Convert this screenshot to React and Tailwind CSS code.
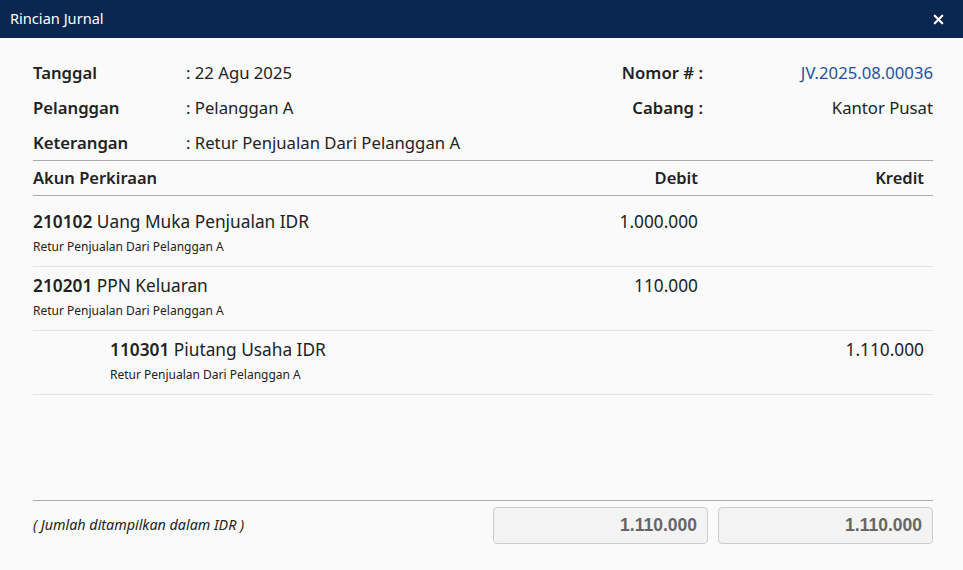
import { X } from "lucide-react";

const rows = [
  { code: "210102", name: "Uang Muka Penjualan IDR", note: "Retur Penjualan Dari Pelanggan A", debit: "1.000.000", kredit: "" },
  { code: "210201", name: "PPN Keluaran", note: "Retur Penjualan Dari Pelanggan A", debit: "110.000", kredit: "" },
  { code: "110301", name: "Piutang Usaha IDR", note: "Retur Penjualan Dari Pelanggan A", debit: "", kredit: "1.110.000", indent: true },
];

const InfoRow = ({ label, value }) => (
  <div className="flex h-[35px] items-center">
    <div className="w-[153px] font-semibold">{label}</div>
    <div>: {value}</div>
  </div>
);

export default function App() {
  return (
    <div
      className="flex h-[570px] w-[963px] flex-col bg-[#fafafa] text-[#222]"
      style={{ fontFamily: "'Noto Sans', 'Open Sans', sans-serif" }}
    >
      <div className="flex h-[38px] shrink-0 items-center justify-between bg-[#0a2751] pl-[10px] pr-[17px] text-white">
        <span className="text-[14.6px]">Rincian Jurnal</span>
        <X size={15} strokeWidth={3.5} />
      </div>

      <div className="flex flex-1 flex-col px-[30px] pt-[17px] text-[16.7px]">
        <div className="flex">
          <div className="flex-1 pl-[3px]">
            <InfoRow label="Tanggal" value="22 Agu 2025" />
            <InfoRow label="Pelanggan" value="Pelanggan A" />
            <InfoRow label="Keterangan" value="Retur Penjualan Dari Pelanggan A" />
          </div>
          <div className="w-[440px]">
            <div className="flex h-[35px] items-center">
              <div className="w-[210px] text-right font-semibold">Nomor # :</div>
              <div className="flex-1 text-right text-[#2451a0]">JV.2025.08.00036</div>
            </div>
            <div className="flex h-[35px] items-center">
              <div className="w-[210px] text-right font-semibold">Cabang :</div>
              <div className="flex-1 text-right">Kantor Pusat</div>
            </div>
          </div>
        </div>

        <div className="ml-[3px] flex h-[36px] items-center border-y border-[#aaa] text-[16.5px] font-semibold">
          <div className="flex-1">Akun Perkiraan</div>
          <div className="w-[215px] pr-[10px] text-right">Debit</div>
          <div className="w-[10px]" />
          <div className="w-[215px] pr-[9px] text-right">Kredit</div>
        </div>

        <div className="ml-[3px] pt-[7px] text-[17.3px]">
          {rows.map((r) => (
            <div key={r.code} className="flex h-[64px] border-b border-[#e4e4e4] pt-[8px]">
              <div className={r.indent ? "flex-1 pl-[77px]" : "flex-1"}>
                <div className="leading-[22px]">
                  <span className="font-semibold">{r.code}</span> {r.name}
                </div>
                <div className="mt-[5px] text-[12px] leading-[18px]">{r.note}</div>
              </div>
              <div className="w-[215px] pr-[10px] text-right leading-[22px]">{r.debit}</div>
              <div className="w-[10px]" />
              <div className="w-[215px] pr-[9px] text-right leading-[22px]">{r.kredit}</div>
            </div>
          ))}
        </div>

        <div className="mt-auto ml-[3px] flex border-t border-[#aaa] pb-[26px] pt-[6px]">
          <div className="flex-1 pt-[7px] text-[14.3px] italic">( Jumlah ditampilkan dalam IDR )</div>
          <div
            className="flex h-[37px] w-[215px] items-center justify-end rounded-[4px] border border-[#ccc] bg-[#f3f3f3] pr-[10px] text-[17.5px] font-bold text-[#666]"
            style={{ fontFamily: "'Liberation Sans', Arial, sans-serif" }}
          >
            1.110.000
          </div>
          <div className="w-[10px]" />
          <div
            className="flex h-[37px] w-[215px] items-center justify-end rounded-[4px] border border-[#ccc] bg-[#f3f3f3] pr-[10px] text-[17.5px] font-bold text-[#666]"
            style={{ fontFamily: "'Liberation Sans', Arial, sans-serif" }}
          >
            1.110.000
          </div>
        </div>
      </div>
    </div>
  );
}
